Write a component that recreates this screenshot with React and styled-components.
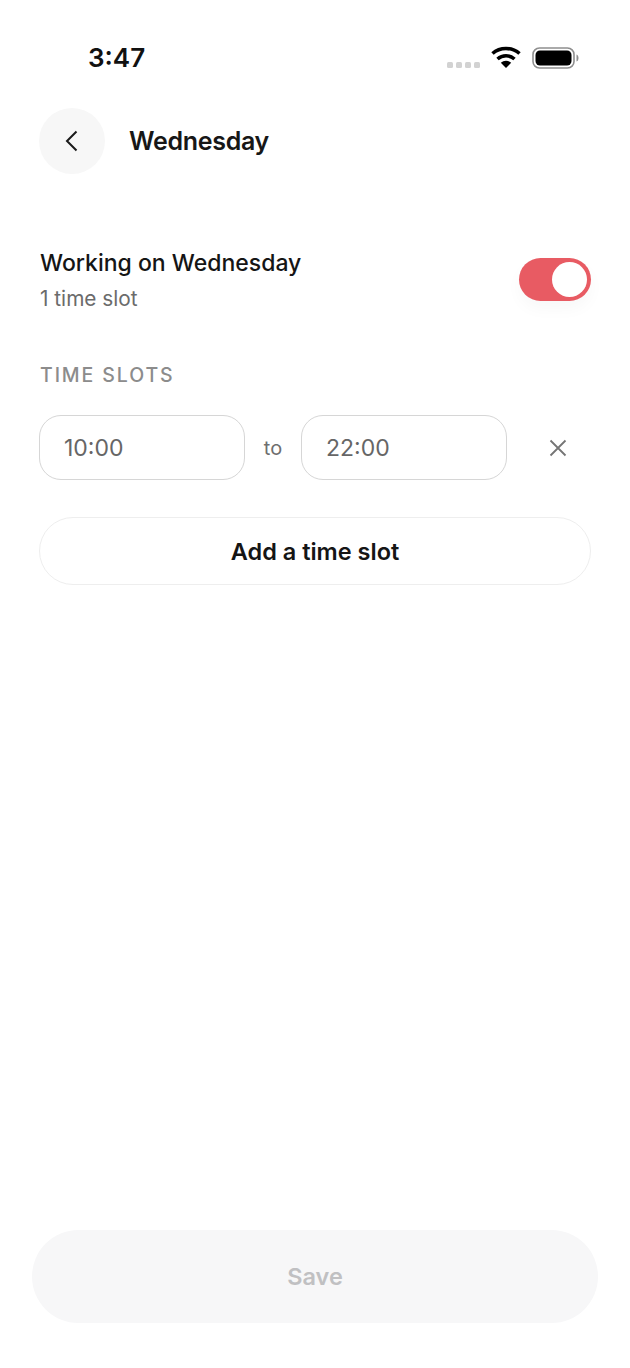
import React from 'react'
import styled, { createGlobalStyle } from 'styled-components'

const GlobalStyle = createGlobalStyle`
  html, body {
    margin: 0;
    padding: 0;
    background: #fff;
  }
  * {
    box-sizing: border-box;
  }
`

const Screen = styled.div`
  width: 630px;
  height: 1368px;
  display: flex;
  flex-direction: column;
  background: #fff;
  font-family: Inter, 'Liberation Sans', sans-serif;
  color: #151515;
  overflow: hidden;
`

const StatusBar = styled.div`
  height: 108px;
  flex: none;
  display: flex;
  align-items: flex-start;
  justify-content: space-between;
  padding: 41px 51px 0 88px;
`

const Clock = styled.div`
  font-size: 26px;
  line-height: 33px;
  font-weight: 600;
  color: #111;
`

const StatusIcons = styled.div`
  display: flex;
  align-items: center;
  height: 33px;
`

const Dots = styled.div`
  display: flex;
  gap: 3px;
  margin: 14px 11px 0 0;
`

const Dot = styled.span`
  width: 6px;
  height: 6px;
  border-radius: 1.5px;
  background: #d2d2d2;
`

const NavBar = styled.div`
  display: flex;
  align-items: center;
  gap: 24px;
  padding: 0 39px;
`

const BackButton = styled.div`
  width: 66px;
  height: 66px;
  border-radius: 50%;
  background: #f7f7f7;
  display: flex;
  align-items: center;
  justify-content: center;
`

const Title = styled.div`
  font-size: 25px;
  line-height: 34px;
  font-weight: 600;
  letter-spacing: -0.3px;
  color: #171717;
`

const Content = styled.div`
  flex: 1;
  display: flex;
  flex-direction: column;
  padding: 75px 39px 0;
`

const WorkingRow = styled.div`
  display: flex;
  align-items: center;
  justify-content: space-between;
`

const WorkingText = styled.div`
  display: flex;
  flex-direction: column;
  gap: 10px;
  padding-left: 1px;
`

const WorkingTitle = styled.div`
  font-size: 23px;
  line-height: 28px;
  font-weight: 500;
  color: #151515;
`

const WorkingSub = styled.div`
  font-size: 20.8px;
  line-height: 24px;
  color: #6b6b6b;
`

const Toggle = styled.div`
  width: 72px;
  height: 43px;
  margin-bottom: 2px;
  border-radius: 22px;
  padding: 4px;
  display: flex;
  justify-content: flex-end;
  background: ${props => (props.$on ? '#e85b63' : '#ddd')};
  box-shadow: 0 8px 16px rgba(0, 0, 0, 0.03);
`

const Knob = styled.span`
  width: 35px;
  height: 35px;
  border-radius: 50%;
  background: #fff;
`

const SectionLabel = styled.div`
  margin-top: 52px;
  padding-left: 1px;
  font-size: 19.5px;
  line-height: 24px;
  font-weight: 500;
  letter-spacing: 1.9px;
  color: #8c8c8c;
`

const SlotRow = styled.div`
  display: flex;
  align-items: center;
  margin-top: 28px;
`

const TimeField = styled.div`
  width: 206px;
  height: 65px;
  border: 1.5px solid #d6d6d6;
  border-radius: 22px;
  padding: 1px 0 0 24px;
  display: flex;
  align-items: center;
  font-size: 23px;
  color: #666;
`

const ToLabel = styled.div`
  width: 56px;
  text-align: center;
  font-size: 20px;
  color: #6f6f6f;
`

const RemoveButton = styled.div`
  width: 20px;
  height: 20px;
  margin-left: 41px;
  display: flex;
`

const AddButton = styled.div`
  height: 68px;
  margin-top: 37px;
  border: 1.5px solid #eeeeee;
  border-radius: 34px;
  display: flex;
  align-items: center;
  justify-content: center;
  font-size: 23.5px;
  font-weight: 600;
  color: #151515;
`

const Footer = styled.div`
  padding: 0 32px 45px;
`

const SaveButton = styled.div`
  height: 93px;
  border-radius: 47px;
  background: #f7f7f8;
  display: flex;
  align-items: center;
  justify-content: center;
  font-size: 23.5px;
  font-weight: 600;
  color: #c0c0c2;
`

const WifiIcon = () => (
  <svg width="30" height="23" viewBox="0 0 30 23" style={{ display: 'block' }}>
    <path d="M1.5 7.5C9 0.8 21 0.8 28.500 7.500" fill="none" stroke="#000" strokeWidth="3.600" />
    <path d="M6.500 13C11.500 8.700 18.500 8.700 23.500 13" fill="none" stroke="#000" strokeWidth="3.600" />
    <path d="M9.800 16.800C12.800 14.100 17.200 14.100 20.200 16.800L15 22Z" fill="#000" />
  </svg>
)

const BatteryIcon = () => (
  <svg width="47" height="22" viewBox="0 0 47 22" style={{ display: 'block', marginLeft: 11 }}>
    <rect x="1" y="1" width="41" height="20" rx="6.500" fill="none" stroke="#8f8f8f" strokeWidth="1.600" />
    <rect x="3.500" y="3.500" width="36" height="15" rx="4.500" fill="#000" />
    <path d="M44.500 7.500C46 8 46.500 9.500 46.500 11C46.500 12.500 46 14 44.500 14.500Z" fill="#8f8f8f" />
  </svg>
)

const App = () => (
  <Screen>
    <GlobalStyle />
    <StatusBar>
      <Clock>3:47</Clock>
      <StatusIcons>
        <Dots>
          <Dot />
          <Dot />
          <Dot />
          <Dot />
        </Dots>
        <WifiIcon />
        <BatteryIcon />
      </StatusIcons>
    </StatusBar>
    <NavBar>
      <BackButton>
        <svg width="14" height="22" viewBox="0 0 14 22">
          <path d="M11.500 1.500L2 11L11.500 20.500" fill="none" stroke="#1a1a1a" strokeWidth="2" />
        </svg>
      </BackButton>
      <Title>Wednesday</Title>
    </NavBar>
    <Content>
      <WorkingRow>
        <WorkingText>
          <WorkingTitle>Working on Wednesday</WorkingTitle>
          <WorkingSub>1 time slot</WorkingSub>
        </WorkingText>
        <Toggle $on>
          <Knob />
        </Toggle>
      </WorkingRow>
      <SectionLabel>TIME SLOTS</SectionLabel>
      <SlotRow>
        <TimeField>10:00</TimeField>
        <ToLabel>to</ToLabel>
        <TimeField>22:00</TimeField>
        <RemoveButton>
          <svg width="20" height="20" viewBox="0 0 20 20">
            <path d="M2.500 2.500L17.500 17.500M17.500 2.500L2.500 17.500" fill="none" stroke="#757575" strokeWidth="1.800" />
          </svg>
        </RemoveButton>
      </SlotRow>
      <AddButton>Add a time slot</AddButton>
    </Content>
    <Footer>
      <SaveButton>Save</SaveButton>
    </Footer>
  </Screen>
)

export default App
